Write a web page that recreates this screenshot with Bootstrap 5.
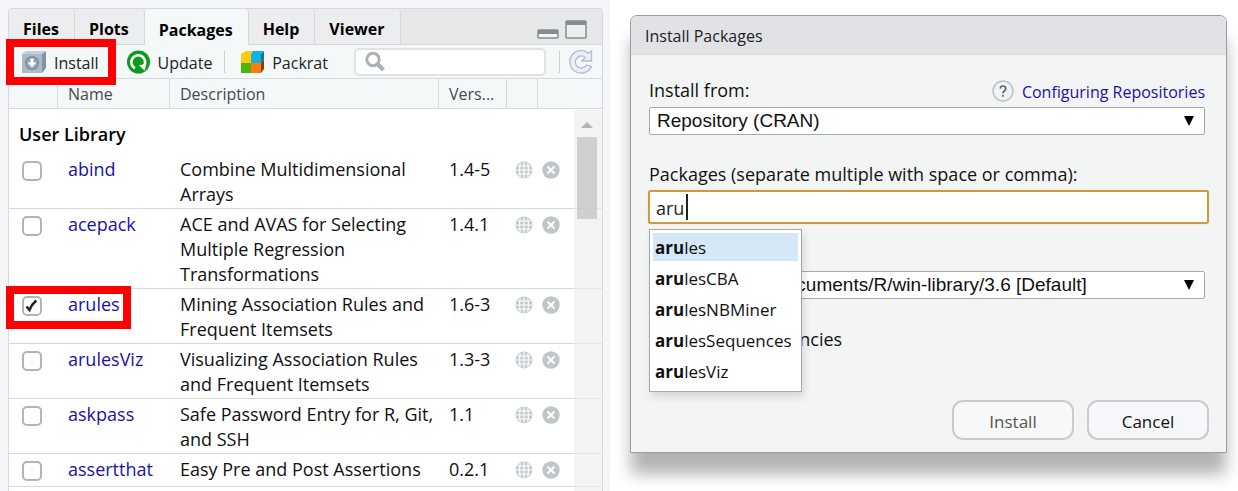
<!DOCTYPE html>
<html lang="en">
<head>
<meta charset="utf-8">
<meta name="viewport" content="width=device-width, initial-scale=1">
<title>Install Packages</title>
<link href="https://cdn.jsdelivr.net/npm/bootstrap@5.3.0/dist/css/bootstrap.min.css" rel="stylesheet">
<style>
  body { font-family: "Open Sans", sans-serif; font-size: 18px; line-height: 25px; color: #111; background: #fff; overflow-x: hidden; }
  a { color: #1a12a8; text-decoration: none; }
  .split { display: grid; grid-template-columns: 610fr 628fr; min-height: 100vh; }
  .left-side { background: #f5f6f9; padding: 8px 7px 0 8px; }

  /* packages pane */
  .pane { border: 1px solid #d5d9dc; border-bottom: 0; border-radius: 4px 4px 0 0; background: #fff; }
  .tab-strip { background: #e6e8ea; border-bottom: 1px solid #d5d9dc; border-radius: 4px 4px 0 0; height: 36px; }
  .tab-strip .nav-link { height: 35px; padding: 6px 15px 0 14px; font-size: 16px; line-height: 25px; font-weight: 700; color: #000; background: #ecedef; border: 0; border-radius: 4px 4px 0 0; border-right: 1px solid #d5d9dc; }
  .tab-strip .nav-link.active { height: 36px; background: #f4f8f9; }
  .window-btns { gap: 6px; padding: 0 15px 5px 0; }
  .tool-strip { background: #f4f8f9; border-bottom: 1px solid #d5d9dc; height: 34px; font-size: 16px; padding: 0 8px 0 12px; }
  .tool { border: 0; background: none; padding: 0; color: #222; height: 24px; line-height: 24px; }
  .tool span { padding-top: 3px; }
  .rule { width: 1px; height: 22px; background: #ccd0d3; }
  .tool + .rule { margin-left: 12px; }
  .finder { height: 28px; border: 2px solid #dfe3e5; border-radius: 5px; background: #fff; margin: 0 13px 0 26px; padding-left: 8px; }
  .finder input { border: 0; outline: 0; min-width: 0; width: 100%; background: none; }
  .pkg { table-layout: fixed; width: 100%; border-collapse: separate; border-spacing: 0; }
  .pkg th { background: #f4f8f9; font-size: 16px; font-weight: 400; color: #444a4e; height: 30px; padding: 1px 0 0 10px; line-height: 25px; border-bottom: 1px solid #d5d9dc; border-right: 1px solid #d5d9dc; }
  .pkg th:last-child { border-right: 0; }
  .pkg td { vertical-align: top; padding: 3px 0 1px 10px; border-bottom: 1px solid #d5d9dc; }
  .pkg .group-row td { border: 0; font-weight: 600; padding: 13px 0 7px 10px; color: #000; }
  .pkg td.tick { padding: 7px 0 5px 13px; line-height: 0; }
  .pkg td.act { padding: 7px 0 0 8px; line-height: 0; }
  .pkg td.act + td.act { padding-left: 4px; }
  .tick input { appearance: none; display: block; width: 20px; height: 20px; margin: 0; border: 2px solid #b4b4b4; border-radius: 5px; background: #fff; }
  .tick input:checked { background: #fff url("data:image/svg+xml,%3Csvg xmlns='http://www.w3.org/2000/svg' viewBox='0 0 17 17'%3E%3Cpath d='M3 9l3 3.4Q8 7 12.800 3' fill='none' stroke='%23222' stroke-width='2.600'/%3E%3C/svg%3E") center / 17px; }
  .icon-btn { border: 0; background: none; padding: 0; line-height: 0; }
  .marker { position: absolute; border: 8px solid #fe0000; pointer-events: none; z-index: 3; }
  .marker-tool { inset: -11px -17px -11px -15px; }
  .marker-row { left: -3px; top: -3px; width: 125px; height: 43px; }
  .scroller { position: absolute; right: 0; top: 31px; bottom: 0; width: 28px; background: rgba(235,235,235,.6); }
  .scroller svg { margin: 12px 7px 0; }
  .thumb { width: 20px; height: 82px; background: rgba(195,195,195,.75); margin: 9px 0 0 3px; }

  /* dialog */
  .dlg { margin: 15px 11px 37px 20px; border: 1px solid #9a9c9e; border-radius: 7px 7px 0 0; background: #f3f5f5; box-shadow: 0 22px 16px -1px rgba(0,0,0,.3); }
  .dlg-title { background: #e1e2e6; border-bottom: 1px solid #d9dade; border-radius: 7px 7px 0 0; font-size: 16px; line-height: 25px; color: #222; padding: 8px 14px 5px; height: 39px; margin: 0; font-weight: 400; }
  .dlg-body { padding: 23px 17px 12px; }
  .inner { padding: 0 4px 0 1px; }
  .dlg-body label { line-height: 25px; }
  .names-label { margin: 27px 0 3px 1px; }
  .pick { display: block; width: 100%; height: 28px; border: 1px solid #a6a8aa; border-radius: 2px; appearance: none; font: 19px/24px "Liberation Sans", sans-serif; color: #111; padding: 0 30px 0 7px; background: #fff url("data:image/svg+xml,%3Csvg xmlns='http://www.w3.org/2000/svg' viewBox='0 0 10 10'%3E%3Cpath d='M0 0h10L5 10z'/%3E%3C/svg%3E") no-repeat right 10px center / 10px 10px; }
  .pkg-input { display: block; width: 100%; height: 34px; border: 2px solid #cf9a3c; border-radius: 3px; outline: 0; padding: 1px 6px 0; color: #222; box-shadow: 0 0 1px #e3b04f; }
  .caret { position: absolute; left: 38px; top: 4px; width: 2px; height: 26px; background: #222; }
  .suggest { position: absolute; left: 1px; top: 39px; width: 153px; border: 1px solid #a3a7b8; background: #fff; padding: 3px; z-index: 5; box-shadow: 2px 5px 8px rgba(0,0,0,.12); margin: 0; list-style: none; }
  .suggest a { display: block; font-size: 17px; line-height: 28px; margin-bottom: 3px; height: 28px; padding: 1px 0 0 2px; color: #111; white-space: nowrap; }
  .suggest .on { background: #d4e8f8; }
  .help-line { font-size: 16px; height: 25px; }
  .lib-row { margin-top: 47px; }
  .dep { width: 16px; height: 16px; margin: 0 0 0 2px; }
  .actions { gap: 13px; }
  .push { width: 122px; height: 40px; border: 2px solid #c9cbcd; border-radius: 11px; background: #f6f7fa; font-size: 17px; line-height: 25px; padding: 3px 0 0; color: #111; }
  .push:disabled { color: #555; background: #f7f8f8; }
</style>
<script src="https://cdn.jsdelivr.net/npm/bootstrap@5.3.0/dist/js/bootstrap.bundle.min.js"></script>
</head>
<body>
<svg class="d-none" xmlns="http://www.w3.org/2000/svg">
  <symbol id="globe" viewBox="0 0 18 18"><circle cx="9" cy="9" r="8.500" fill="#c3cbd0"/><path d="M9 1v16M1 9h16M2.500 5h13M2.500 13h13M5.200 2Q3.800 9 5.200 16M12.800 2Q14.200 9 12.800 16" fill="none" stroke="#fff" stroke-width="1.100"/></symbol>
  <symbol id="drop" viewBox="0 0 18 18"><circle cx="9" cy="9" r="8.700" fill="#bfc5c9"/><path d="M5.500 5.500l7 7M12.500 5.500l-7 7" stroke="#fff" stroke-width="2"/></symbol>
</svg>
<div class="split">
  <section class="left-side d-flex flex-column">
    <div class="pane flex-grow-1 d-flex flex-column">
      <div class="tab-strip d-flex">
        <ul class="nav flex-nowrap flex-grow-1">
          <li class="nav-item"><button class="nav-link">Files</button></li>
          <li class="nav-item"><button class="nav-link">Plots</button></li>
          <li class="nav-item"><button class="nav-link active">Packages</button></li>
          <li class="nav-item"><button class="nav-link">Help</button></li>
          <li class="nav-item"><button class="nav-link">Viewer</button></li>
        </ul>
        <div class="window-btns d-flex align-items-end">
          <button class="icon-btn" aria-label="Minimize"><svg width="22" height="10"><rect x="1" y="1" width="20" height="8" rx="1" fill="#f4f6f6" stroke="#848d91" stroke-width="1.500"/><path d="M1 3h20" stroke="#848d91" stroke-width="4"/></svg></button>
          <button class="icon-btn" aria-label="Maximize"><svg width="22" height="19"><rect x="1" y="1" width="20" height="17" rx="1" fill="#eceeef" stroke="#848d91" stroke-width="1.500"/><path d="M1 3h20" stroke="#848d91" stroke-width="4"/></svg></button>
        </div>
      </div>
      <div class="tool-strip d-flex align-items-center">
        <div class="position-relative">
          <button class="tool d-flex align-items-center gap-2">
            <svg width="25" height="24" viewBox="0 0 25 24"><path d="M1 4L5 1h20l-4 3z" fill="#c3d0de"/><path d="M21 4l4-3v17l-4 5z" fill="#8194a9"/><rect x="1" y="4" width="20" height="19" fill="#a9bacb"/><circle cx="11" cy="13" r="7" fill="#7b8c9f"/><circle cx="11" cy="13" r="5.500" fill="#93a4b5"/><path d="M9.500 8.500h3v4h3L11 17.500l-4.500-5h3z" fill="#fff"/></svg>
            <span>Install</span>
          </button>
          <div class="marker marker-tool"></div>
        </div>
        <button class="tool d-flex align-items-center gap-2 ms-4 ps-1">
          <svg width="23" height="24" viewBox="0 0 24 24"><circle cx="12" cy="12" r="12" fill="#0b9a1d"/><path d="M8.300 18.500A7.200 7.200 0 1 1 17.800 16" fill="none" stroke="#fff" stroke-width="2.800"/><path d="M12.500 15.500l7.500-1.500-1.500 7z" fill="#fff"/></svg>
          <span>Update</span>
        </button>
        <div class="rule"></div>
        <button class="tool d-flex align-items-center gap-2 ms-3">
          <svg width="23" height="24" viewBox="0 0 23 24"><path d="M0 4l5-3h7l-2 3v9H0z" fill="#ffc90d"/><path d="M10 4l2-3h11l-3 3v9H10z" fill="#0fb3dc"/><path d="M0 13h10v10H0z" fill="#4bb50b"/><path d="M10 13h10v10H10z" fill="#fa7d14"/><path d="M20 4l3-3v8l-3 4z" fill="#087a9c"/><path d="M20 13l3-4v10l-3 4z" fill="#8f3b06"/></svg>
          <span>Packrat</span>
        </button>
        <label class="finder flex-grow-1 d-flex align-items-center">
          <svg width="22" height="22" viewBox="0 0 22 22" class="flex-shrink-0"><circle cx="9" cy="8.500" r="6.200" fill="none" stroke="#aab0b4" stroke-width="3"/><path d="M13.500 13l6 6" stroke="#aab0b4" stroke-width="4"/></svg>
          <input type="search" aria-label="Search packages">
        </label>
        <div class="rule me-2"></div>
        <button class="icon-btn" aria-label="Refresh"><svg width="26" height="26" viewBox="0 0 26 26"><path d="M20.500 4.200L23.500 2v10h-9.500l3.200-3.600A6 6 0 1 0 18.500 16l4.800 1.700A11.300 11.300 0 1 1 20.500 4.200z" fill="#e8effb" stroke="#b3bcc9" stroke-width="1.300"/></svg></button>
      </div>
      <div class="position-relative flex-grow-1">
        <table class="pkg">
          <colgroup><col style="width:49px"><col style="width:112px"><col><col style="width:68px"><col style="width:31px"><col style="width:64px"></colgroup>
          <thead><tr><th></th><th>Name</th><th>Description</th><th>Vers...</th><th></th><th></th></tr></thead>
          <tbody>
            <tr class="group-row"><td colspan="6">User Library</td></tr>
            <tr><td class="tick"><input type="checkbox" aria-label="abind"></td><td><a href="#">abind</a></td><td>Combine Multidimensional Arrays</td><td>1.4-5</td><td class="act"><button class="icon-btn" aria-label="Browse"><svg width="18" height="18"><use href="#globe"/></svg></button></td><td class="act"><button class="icon-btn" aria-label="Remove"><svg width="18" height="18"><use href="#drop"/></svg></button></td></tr>
            <tr><td class="tick"><input type="checkbox" aria-label="acepack"></td><td><a href="#">acepack</a></td><td>ACE and AVAS for Selecting Multiple Regression Transformations</td><td>1.4.1</td><td class="act"><button class="icon-btn" aria-label="Browse"><svg width="18" height="18"><use href="#globe"/></svg></button></td><td class="act"><button class="icon-btn" aria-label="Remove"><svg width="18" height="18"><use href="#drop"/></svg></button></td></tr>
            <tr><td class="tick position-relative"><input type="checkbox" aria-label="arules" checked><div class="marker marker-row"></div></td><td><a href="#">arules</a></td><td>Mining Association Rules and Frequent Itemsets</td><td>1.6-3</td><td class="act"><button class="icon-btn" aria-label="Browse"><svg width="18" height="18"><use href="#globe"/></svg></button></td><td class="act"><button class="icon-btn" aria-label="Remove"><svg width="18" height="18"><use href="#drop"/></svg></button></td></tr>
            <tr><td class="tick"><input type="checkbox" aria-label="arulesViz"></td><td><a href="#">arulesViz</a></td><td>Visualizing Association Rules and Frequent Itemsets</td><td>1.3-3</td><td class="act"><button class="icon-btn" aria-label="Browse"><svg width="18" height="18"><use href="#globe"/></svg></button></td><td class="act"><button class="icon-btn" aria-label="Remove"><svg width="18" height="18"><use href="#drop"/></svg></button></td></tr>
            <tr><td class="tick"><input type="checkbox" aria-label="askpass"></td><td><a href="#">askpass</a></td><td>Safe Password Entry for R, Git, and SSH</td><td>1.1</td><td class="act"><button class="icon-btn" aria-label="Browse"><svg width="18" height="18"><use href="#globe"/></svg></button></td><td class="act"><button class="icon-btn" aria-label="Remove"><svg width="18" height="18"><use href="#drop"/></svg></button></td></tr>
            <tr><td class="tick"><input type="checkbox" aria-label="assertthat"></td><td><a href="#">assertthat</a></td><td>Easy Pre and Post Assertions</td><td>0.2.1</td><td class="act"><button class="icon-btn" aria-label="Browse"><svg width="18" height="18"><use href="#globe"/></svg></button></td><td class="act"><button class="icon-btn" aria-label="Remove"><svg width="18" height="18"><use href="#drop"/></svg></button></td></tr>
          </tbody>
        </table>
        <div class="scroller d-flex flex-column">
          <svg width="12" height="6"><path d="M0 6L6 0l6 6z" fill="#b5b5b5"/></svg>
          <div class="thumb"></div>
        </div>
      </div>
    </div>
  </section>

  <section>
    <div class="dlg" role="dialog" aria-labelledby="dlgTitle">
      <h1 class="dlg-title" id="dlgTitle">Install Packages</h1>
      <form class="dlg-body">
        <div class="inner">
          <div class="d-flex justify-content-between mb-1">
            <label for="source">Install from:</label>
            <a href="#" class="help-line d-flex align-items-center gap-2">
              <svg width="22" height="22" viewBox="0 0 22 22"><circle cx="11" cy="11" r="10" fill="#f0f3f5" stroke="#b9c3ca" stroke-width="1.500"/><path d="M8.200 8.600Q8.400 6 11 6t2.800 2.400q0 1.400-1.400 2.300T11 13.200M11 14.800v2" fill="none" stroke="#5a666e" stroke-width="1.700"/></svg>
              <span class="pt-1">Configuring Repositories</span>
            </a>
          </div>
          <select class="pick" id="source"><option>Repository (CRAN)</option></select>
        </div>
        <label for="names" class="names-label d-block">Packages (separate multiple with space or comma):</label>
        <div class="position-relative">
          <input class="pkg-input" id="names" type="text" value="aru" autocomplete="off">
          <span class="caret"></span>
          <ul class="suggest">
            <li><a href="#" class="on"><b>aru</b>les</a></li>
            <li><a href="#"><b>aru</b>lesCBA</a></li>
            <li><a href="#"><b>aru</b>lesNBMiner</a></li>
            <li><a href="#"><b>aru</b>lesSequences</a></li>
            <li><a href="#"><b>aru</b>lesViz</a></li>
          </ul>
        </div>
        <div class="inner lib-row">
          <select class="pick" aria-label="Library"><option>C:/Users/test/Documents/R/win-library/3.6 [Default]</option></select>
        </div>
        <div class="d-flex align-items-center gap-1 mt-4 pt-1">
          <input class="dep" type="checkbox" id="dep" checked>
          <label for="dep">Install dependencies</label>
        </div>
        <div class="actions d-flex justify-content-end mt-5">
          <button type="button" class="push" disabled>Install</button>
          <button type="button" class="push">Cancel</button>
        </div>
      </form>
    </div>
  </section>
</div>
</body>
</html>
